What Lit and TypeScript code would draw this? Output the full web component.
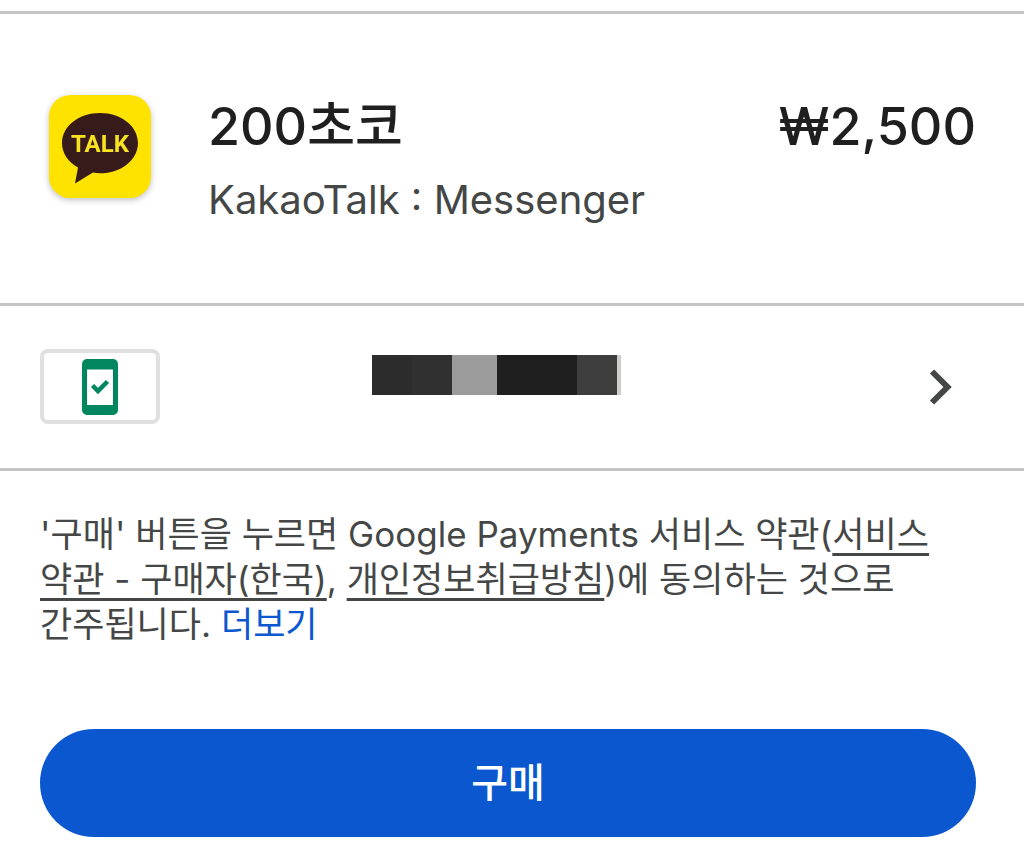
import { LitElement, html, css } from "lit";
import { customElement, property } from "lit/decorators.js";

@customElement("product-summary")
class ProductSummary extends LitElement {
  @property() name = "";
  @property() app = "";
  @property() price = "";

  static styles = css`
    :host {
      display: flex;
      align-items: flex-start;
      padding: 81px 48px 75px;
      color: #1f1f1f;
    }
    .logo {
      flex: none;
      width: 104px;
      height: 104px;
      margin-right: 56px;
      border-radius: 22px;
      filter: drop-shadow(0 2px 3px rgba(0, 0, 0, 0.25));
    }
    .logo-text {
      font: 700 24px Roboto, "Noto Sans", sans-serif;
    }
    .details {
      flex: 1;
      min-width: 0;
    }
    .name,
    .price {
      margin: 0;
      font-size: 52px;
      line-height: 64px;
      font-weight: 500;
    }
    .price {
      white-space: nowrap;
    }
    .app {
      margin: 0;
      padding-top: 13px;
      font-size: 40px;
      line-height: 56px;
      color: #444746;
    }
  `;

  render() {
    return html`
      <svg class="logo" viewBox="0 0 104 104" role="img" aria-label="KakaoTalk">
        <rect x="1" y="0" width="102" height="103" rx="21" fill="#ffe300" />
        <path
          d="M52 18C31 18 14 31 14 48c0 10 6 19 16 24.500L27 88.500 45 77.500c2.500.5 4.500.8 7 .8 21 0 38-13.500 38-30.300S73 18 52 18z"
          fill="#371b1b"
        />
        <text class="logo-text" x="52" y="57" text-anchor="middle" fill="#f8e321">TALK</text>
      </svg>
      <div class="details">
        <h1 class="name">${this.name}</h1>
        <p class="app">${this.app}</p>
      </div>
      <p class="price">${this.price}</p>
    `;
  }
}

@customElement("payment-method")
class PaymentMethod extends LitElement {
  static styles = css`
    .row {
      display: grid;
      grid-template-columns: 120px 1fr 70px;
      align-items: center;
      width: 100%;
      padding: 43px 48px 44px 40px;
      border: 0;
      background: none;
      color: #444746;
      cursor: pointer;
      box-sizing: border-box;
    }
    .card {
      display: flex;
      align-items: center;
      justify-content: center;
      height: 75px;
      border: 4px solid #e0e0e0;
      border-radius: 8px;
      box-sizing: border-box;
    }
    .masked {
      display: flex;
      justify-self: center;
      align-self: start;
      height: 40px;
      margin-top: 6px;
      padding-right: 74px;
    }
    .block {
      width: 40px;
    }
    .block.a { background: #2c2c2c; }
    .block.b { background: #303030; }
    .block.c { width: 45px; background: #9b9b9b; }
    .block.d { width: 80px; background: #1f1f1f; }
    .block.e { background: #3e3e3e; }
    .block.f { width: 4px; background: #cfcccc; }
    .chevron {
      justify-self: center;
    }
  `;

  render() {
    return html`
      <button class="row" type="button" aria-label="결제 수단">
        <span class="card">
          <svg width="36" height="56" viewBox="0 0 36 56" aria-hidden="true">
            <path
              fill="#00875f"
              fill-rule="evenodd"
              d="M5 0h26a5 5 0 0 1 5 5v46a5 5 0 0 1-5 5H5a5 5 0 0 1-5-5V5a5 5 0 0 1 5-5zM5 10.500v35.500h26V10.500z"
            />
            <path d="M10.500 26.500l5.500 5.500L25.500 22.500" fill="none" stroke="#00875f" stroke-width="4.500" />
          </svg>
        </span>
        <span class="masked">
          <span class="block a"></span><span class="block b"></span><span class="block c"></span
          ><span class="block d"></span><span class="block e"></span><span class="block f"></span>
        </span>
        <svg class="chevron" width="24" height="36" viewBox="0 0 24 36" aria-hidden="true">
          <path d="M3 2.500L18.500 18 3 33.500" fill="none" stroke="#444746" stroke-width="6" />
        </svg>
      </button>
    `;
  }
}

@customElement("app-root")
class AppRoot extends LitElement {
  static styles = css`
    :host {
      display: block;
      padding-top: 11px;
      background: #fff;
      font-family: Inter, "Noto Sans CJK KR", sans-serif;
    }
    .section {
      border-top: 3px solid #c4c4c4;
    }
    .purchase {
      padding: 41px 48px 11px 40px;
    }
    .terms {
      margin: 0 0 82px;
      font-size: 35px;
      line-height: 45px;
      color: #444746;
      word-break: keep-all;
    }
    .link {
      color: inherit;
      text-decoration: underline;
      text-decoration-thickness: 3px;
      text-underline-offset: 6px;
      text-decoration-skip-ink: none;
    }
    .more {
      color: #0b57d0;
      text-decoration: none;
    }
    .buy {
      display: block;
      width: 100%;
      height: 108px;
      padding: 0 0 6px;
      border: 0;
      border-radius: 54px;
      background: #0b57d0;
      color: #fff;
      font-family: inherit;
      font-size: 40px;
      font-weight: 500;
      cursor: pointer;
    }
  `;

  render() {
    return html`
      <main>
        <product-summary
          class="section"
          name="200초코"
          app="KakaoTalk : Messenger"
          price="₩2,500"
        ></product-summary>
        <div class="section"><payment-method></payment-method></div>
        <div class="section purchase">
          <p class="terms">
            '구매' 버튼을 누르면 Google Payments 서비스 약관(<a class="link" href="#terms">서비스 약관 - 구매자(한국)</a>,
            <a class="link" href="#privacy">개인정보취급방침</a>)에 동의하는 것으로 간주됩니다.
            <a class="more" href="#more">더보기</a>
          </p>
          <button class="buy" type="button">구매</button>
        </div>
      </main>
    `;
  }
}
